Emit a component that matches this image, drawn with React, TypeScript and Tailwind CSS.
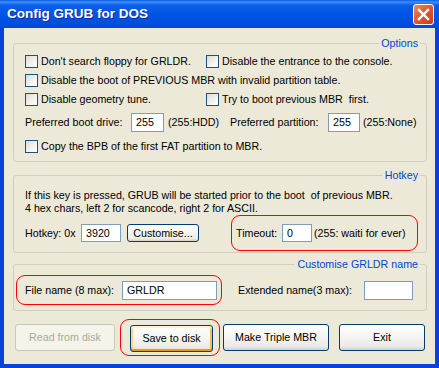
import React from "react";

function Check({ label, className = "" }: { label: string; className?: string }) {
  return (
    <div className={`flex items-center ${className}`}>
      <span className="w-[13px] h-[13px] shrink-0 border border-[#1C5180] bg-[linear-gradient(135deg,#DCDCD7_0%,#F4F4F0_60%,#FFFFFF_100%)]" />
      <span className="ml-[3px] whitespace-pre">{label}</span>
    </div>
  );
}

function TextBox({ value = "", className = "" }: { value?: string; className?: string }) {
  return (
    <div className={`shrink-0 border border-[#7F9DB9] bg-white flex items-center pl-[4px] ${className}`}>
      {value}
    </div>
  );
}

function Group({ title, className = "", children }: { title: string; className?: string; children: React.ReactNode }) {
  return (
    <div className={`relative border border-[#D0D0BF] rounded-[3px] ${className}`}>
      <span className="absolute right-[6px] top-[-8px] bg-[#ECE9D8] px-[2px] leading-[14px] text-[#0046D5]">
        {title}
      </span>
      {children}
    </div>
  );
}

function XpButton({ label, className = "", focused = false, disabled = false }: { label: string; className?: string; focused?: boolean; disabled?: boolean }) {
  if (disabled) {
    return (
      <div className={`shrink-0 h-[27px] rounded-[3px] border border-[#C9C7BA] bg-[#F5F4EA] text-[#ACA899] flex items-center justify-center ${className}`}>
        {label}
      </div>
    );
  }
  return (
    <div
      className={`shrink-0 rounded-[3px] border border-[#003C74] bg-[linear-gradient(to_bottom,#FFFFFF_0%,#F6F6F3_40%,#ECEBE6_85%,#D6D0C5_100%)] flex items-center justify-center ${
        focused
          ? "shadow-[inset_0_2px_0_#FFF0CF,inset_0_-2px_0_#E5971F,inset_2px_0_0_#FBD58B,inset_-2px_0_0_#F5BE52]"
          : ""
      } ${className}`}
    >
      {label}
    </div>
  );
}

export default function App() {
  return (
    <div className="w-[439px] h-[368px] flex flex-col bg-[#0842D8] font-['Liberation_Sans',Arial,sans-serif] text-[10.7px] text-black">
      {/* Title bar */}
      <div className="h-[28px] shrink-0 flex items-center justify-between pl-[7px] pr-[5px] bg-[linear-gradient(to_bottom,#0A5DE8_0px,#3D8EF6_2px,#0D5FE8_5px,#0055E5_14px,#0050DF_22px,#0347D9_28px)]">
        <span className="text-white font-bold text-[13.5px] [text-shadow:1px_1px_0_#0A2A9A]">
          Config GRUB for DOS
        </span>
        <div className="w-[21px] h-[21px] rounded-[3px] border border-white bg-[linear-gradient(135deg,#F0896B_0%,#E35A34_45%,#C93A1A_100%)] flex items-center justify-center">
          <svg width="13" height="13" viewBox="0 0 13 13">
            <path d="M2 2 L11 11 M11 2 L2 11" stroke="white" strokeWidth="2.4" strokeLinecap="square" />
          </svg>
        </div>
      </div>

      {/* Client area */}
      <div className="flex-1 mx-[4px] mb-[4px] bg-[#ECE9D8] pt-[15px] pl-[9px] pr-[8px] flex flex-col">
        {/* Options */}
        <Group title="Options" className="pt-[8px] pb-[5px] pl-[11px]">
          <div className="h-[19px] flex items-center">
            <Check label="Don't search floppy for GRLDR." className="w-[181px]" />
            <Check label="Disable the entrance to the console." />
          </div>
          <div className="h-[19px] flex items-center">
            <Check label="Disable the boot of PREVIOUS MBR with invalid partition table." />
          </div>
          <div className="h-[19px] flex items-center">
            <Check label="Disable geometry tune." className="w-[181px]" />
            <Check label="Try to boot previous MBR  first." />
          </div>
          <div className="h-[20px] mt-[3px] flex items-center">
            <span className="w-[106px] shrink-0">Preferred boot drive:</span>
            <TextBox value="255" className="w-[33px] h-[19px]" />
            <span className="w-[62px] shrink-0 ml-[4px]">(255:HDD)</span>
            <span className="w-[98px] shrink-0">Preferred partition:</span>
            <TextBox value="255" className="w-[32px] h-[19px]" />
            <span className="ml-[3px]">(255:None)</span>
          </div>
          <div className="h-[19px] mt-[5px] flex items-center">
            <Check label="Copy the BPB of the first FAT partition to MBR." />
          </div>
        </Group>

        {/* Hotkey */}
        <Group title="Hotkey" className="mt-[13px] pt-[13px] pb-[1px] pl-[11px]">
          <div className="leading-[13px] whitespace-pre">
            If this key is pressed, GRUB will be started prior to the boot  of previous MBR.
          </div>
          <div className="leading-[13px] whitespace-pre">4 hex chars, left 2 for scancode, right 2 for ASCII.</div>
          <div className="h-[36px] flex items-center">
            <span className="w-[56px] shrink-0">Hotkey: 0x</span>
            <TextBox value="3920" className="w-[40px] h-[18px]" />
            <XpButton label="Customise..." className="w-[72px] h-[18px] ml-[6px]" />
            <div className="ml-[32px] w-[187px] h-[36px] border border-[#FF0000] rounded-[9px] flex items-center pl-[4px]">
              <span className="w-[46px] shrink-0">Timeout:</span>
              <TextBox value="0" className="w-[30px] h-[18px]" />
              <span className="ml-[2px]">(255: waiti for ever)</span>
            </div>
          </div>
        </Group>

        {/* Customise GRLDR name */}
        <Group title="Customise GRLDR name" className="mt-[11px] pt-[10px] pb-[5px]">
          <div className="h-[30px] flex items-center">
            <div className="ml-[2px] w-[206px] h-[30px] border border-[#FF0000] rounded-[9px] flex items-center pl-[8px]">
              <span className="w-[97px] shrink-0">File name (8 max):</span>
              <TextBox value="GRLDR" className="w-[95px] h-[19px]" />
            </div>
            <span className="ml-[16px] w-[126px] shrink-0">Extended name(3 max):</span>
            <TextBox className="w-[49px] h-[19px]" />
          </div>
        </Group>

        {/* Buttons */}
        <div className="mt-[8px] flex items-center ml-[2px]">
          <XpButton label="Read from disk" disabled className="w-[100px]" />
          <div className="ml-[5px] w-[100px] h-[37px] border border-[#FF0000] rounded-[9px] flex items-center pl-[9px] pt-[2px]">
            <XpButton label="Save to disk" focused className="w-[83px] h-[27px]" />
          </div>
          <XpButton label="Make Triple MBR" className="ml-[3px] w-[106px] h-[27px]" />
          <XpButton label="Exit" className="ml-[10px] w-[86px] h-[27px]" />
        </div>
      </div>
    </div>
  );
}
